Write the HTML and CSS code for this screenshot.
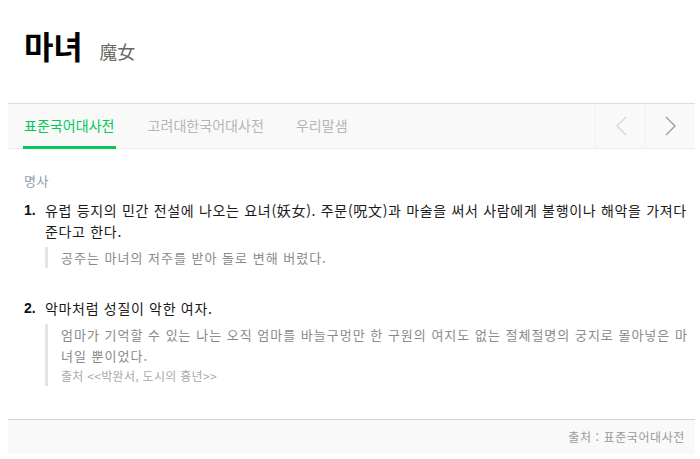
FILE: index.html
```html
<!DOCTYPE html>
<html lang="ko">
<head>
<meta charset="utf-8">
<link rel="stylesheet" href="styles.css">
</head>
<body>
<div class="page">
  <header class="head">
    <h1 class="word">마녀</h1>
    <span class="hanja">魔女</span>
  </header>
  <nav class="tabs">
    <div class="tab-list">
      <span class="tab active">표준국어대사전</span>
      <span class="tab">고려대한국어대사전</span>
      <span class="tab">우리말샘</span>
    </div>
    <div class="arrows">
      <span class="arrow prev"><svg width="12" height="20" viewBox="0 0 12 20"><path d="M11 1 L2 10 L11 19" fill="none" stroke="#d6d6d6" stroke-width="1.3"/></svg></span>
      <span class="arrow next"><svg width="12" height="20" viewBox="0 0 12 20"><path d="M1 1 L10 10 L1 19" fill="none" stroke="#9a9a9a" stroke-width="1.3"/></svg></span>
    </div>
  </nav>
  <section class="body">
    <div class="pos">명사</div>
    <ol class="means">
      <li class="mean">
        <span class="num">1.</span>
        <div class="mean-body">
          <p class="desc">유럽 등지의 민간 전설에 나오는 요녀(妖女). 주문(呪文)과 마술을 써서 사람에게 불행이나 해악을 가져다준다고 한다.</p>
          <div class="example"><p>공주는 마녀의 저주를 받아 돌로 변해 버렸다.</p></div>
        </div>
      </li>
      <li class="mean second">
        <span class="num">2.</span>
        <div class="mean-body">
          <p class="desc">악마처럼 성질이 악한 여자.</p>
          <div class="example">
            <p>엄마가 기억할 수 있는 나는 오직 엄마를 바늘구멍만 한 구원의 여지도 없는 절체절명의 궁지로 몰아넣은 마녀일 뿐이었다.</p>
            <p class="src">출처 &lt;&lt;박완서, 도시의 흉년&gt;&gt;</p>
          </div>
        </div>
      </li>
    </ol>
  </section>
  <footer class="foot">출처 : 표준국어대사전</footer>
</div>
</body>
</html>
```
FILE: styles.css
```css
* { box-sizing: border-box; }
html, body { margin: 0; padding: 0; background: #fff; }
body {
  font-family: "Noto Sans CJK KR", "Noto Sans", sans-serif;
  color: #222;
}
.page {
  margin: 0 5px 0 8px;
  width: 687px;
}
.head {
  display: flex;
  align-items: baseline;
  padding: 22px 0 0 16px;
  height: 103px;
}
.word {
  margin: 0;
  font-size: 32px;
  font-weight: 700;
  color: #000;
  line-height: 46px;
  letter-spacing: -0.3px;
}
.hanja {
  margin-left: 17px;
  font-size: 18px;
  color: #666;
}
.tabs {
  display: flex;
  justify-content: space-between;
  height: 46px;
  background: #f9f9f9;
  border-top: 1px solid #dcdcdc;
  border-bottom: 1px solid #ececec;
}
.tab-list {
  display: flex;
  gap: 32px;
  padding-left: 15px;
}
.tab {
  font-size: 14px;
  color: #b5b5b5;
  line-height: 43px;
  height: 45px;
  letter-spacing: 0.05px;
}
.tab.active {
  color: #03c75a;
  border-bottom: 3px solid #03c75a;
  padding: 0 1px;
}
.arrows { display: flex; }
.arrow {
  width: 50px;
  height: 44px;
  display: flex;
  align-items: center;
  justify-content: center;
  border-left: 1px solid #f0f0f0;
}
.body {
  padding: 22px 0 33px 16px;
}
.pos {
  font-size: 13px;
  color: #8f9db0;
  line-height: 20px;
  letter-spacing: 0.5px;
}
.means {
  list-style: none;
  margin: 9px 0 0;
  padding: 0;
}
.mean {
  display: flex;
}
.mean.second { margin-top: 30px; }
.num {
  width: 21px;
  font-size: 14px;
  font-weight: 700;
  line-height: 21px;
  font-family: "Liberation Sans", sans-serif;
  color: #111;
}
.mean-body { flex: 1; }
.desc {
  margin: 0;
  font-size: 14px;
  line-height: 21px;
  color: #1a1a1a;
  padding-right: 6px;
  letter-spacing: 0.68px;
}
.example {
  margin-top: 5px;
  border-left: 3px solid #e4e4e4;
  padding-left: 13px;
  padding-right: 6px;
}
.example p {
  margin: 0;
  font-size: 13px;
  line-height: 21px;
  color: #8a8a8a;
  letter-spacing: 1px;
}
.example .src {
  font-size: 12px;
  color: #aaa;
  line-height: 20px;
  letter-spacing: 0.3px;
}
.foot {
  height: 35px;
  background: #f9f9f9;
  border-top: 1px solid #d4d4d4;
  text-align: right;
  padding-right: 10px;
  font-size: 12px;
  line-height: 33px;
  color: #999;
  letter-spacing: 0.6px;
}
```
